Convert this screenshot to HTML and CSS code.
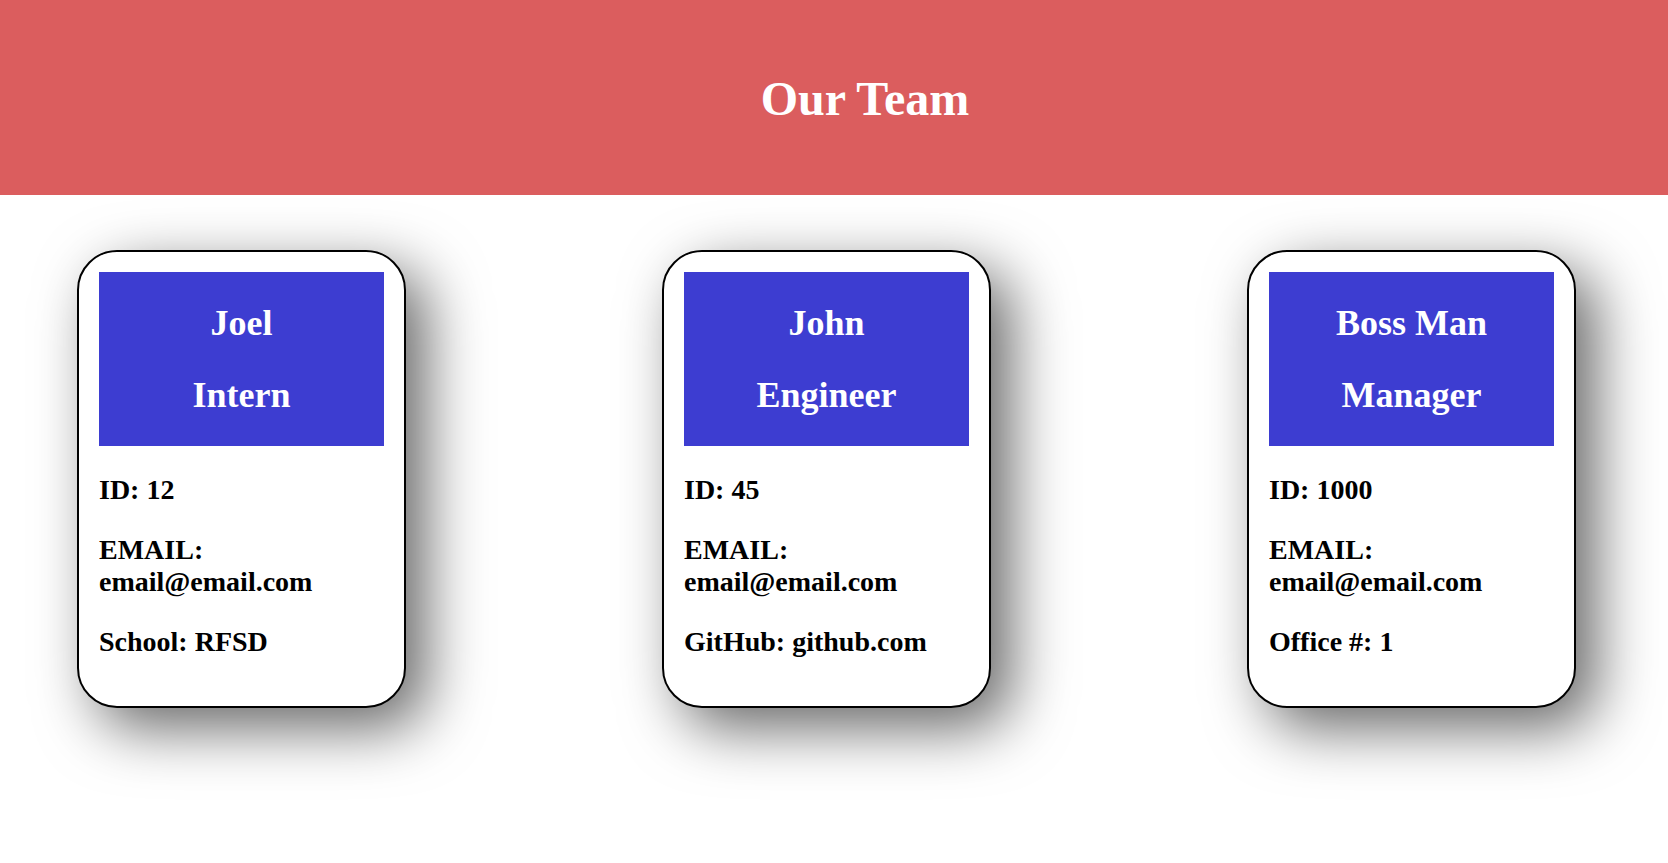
FILE: index.html
```html
<!DOCTYPE html>
<html lang="en">
<head>
<meta charset="utf-8">
<title>Our Team</title>
<link rel="stylesheet" href="styles.css">
</head>
<body>
<header class="banner">
  <h1 class="banner-title">Our Team</h1>
</header>
<main class="team">
  <section class="card">
    <div class="card-head">
      <h2 class="card-name">Joel</h2>
      <h2 class="card-role">Intern</h2>
    </div>
    <div class="card-body">
      <p class="card-line">ID: 12</p>
      <p class="card-line">EMAIL: email@email.com</p>
      <p class="card-line">School: RFSD</p>
    </div>
  </section>
  <section class="card">
    <div class="card-head">
      <h2 class="card-name">John</h2>
      <h2 class="card-role">Engineer</h2>
    </div>
    <div class="card-body">
      <p class="card-line">ID: 45</p>
      <p class="card-line">EMAIL: email@email.com</p>
      <p class="card-line">GitHub: github.com</p>
    </div>
  </section>
  <section class="card">
    <div class="card-head">
      <h2 class="card-name">Boss Man</h2>
      <h2 class="card-role">Manager</h2>
    </div>
    <div class="card-body">
      <p class="card-line">ID: 1000</p>
      <p class="card-line">EMAIL: email@email.com</p>
      <p class="card-line">Office #: 1</p>
    </div>
  </section>
</main>
</body>
</html>
```
FILE: styles.css
```css
html, body {
  margin: 0;
  padding: 0;
  background: #ffffff;
}

html {
  min-height: 100%;
}

body {
  font-family: "Liberation Serif", "Times New Roman", serif;
  color: #000000;
  min-height: 863px;
}

.banner {
  background: #db5d5e;
  height: 195px;
  box-sizing: border-box;
  padding: 71px 0 0 62px;
  text-align: center;
}

.banner-title {
  margin: 0;
  font-size: 48px;
  font-weight: bold;
  line-height: normal;
  color: #ffffff;
}

.team {
  display: flex;
  align-items: flex-start;
  gap: 256px;
  padding: 55px 0 140px 77px;
}

.card {
  width: 285px;
  padding: 20px;
  border: 2px solid #000000;
  border-radius: 40px;
  background: #ffffff;
  box-shadow: 20px 20px 60px rgba(0, 0, 0, 0.6);
  flex: none;
}

.card-head {
  background: #3d3dd1;
  color: #ffffff;
  display: flex;
  flex-direction: column;
  gap: 30px;
  padding: 30px 0;
  text-align: center;
}

.card-name,
.card-role {
  margin: 0;
  font-size: 36px;
  font-weight: bold;
  line-height: normal;
}

.card-body {
  display: flex;
  flex-direction: column;
  gap: 28px;
  padding: 28px 0;
}

.card-line {
  margin: 0;
  font-size: 28px;
  font-weight: bold;
  line-height: normal;
}
```
